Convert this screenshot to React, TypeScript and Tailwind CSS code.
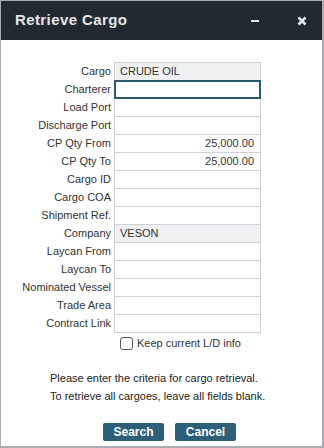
import React from 'react';

type Field = { label: string; value?: string; align?: 'left' | 'right'; readOnly?: boolean; focused?: boolean };

const fields: Field[] = [
  { label: 'Cargo', value: 'CRUDE OIL', readOnly: true },
  { label: 'Charterer', focused: true },
  { label: 'Load Port' },
  { label: 'Discharge Port' },
  { label: 'CP Qty From', value: '25,000.00', align: 'right' },
  { label: 'CP Qty To', value: '25,000.00', align: 'right' },
  { label: 'Cargo ID' },
  { label: 'Cargo COA' },
  { label: 'Shipment Ref.' },
  { label: 'Company', value: 'VESON', readOnly: true },
  { label: 'Laycan From' },
  { label: 'Laycan To' },
  { label: 'Nominated Vessel' },
  { label: 'Trade Area' },
  { label: 'Contract Link' },
];

const FieldRow: React.FC<{ field: Field; first: boolean }> = ({ field, first }) => {
  const box = field.focused
    ? 'border-2 border-[#2b5a6f] relative z-10'
    : 'border border-[#cdd1d6]';
  return (
    <div className={`flex items-stretch h-[19px] ${first ? '' : '-mt-px'}`}>
      <div className="w-[112px] pr-[3px] text-right text-[11px] leading-[19px] text-[#333]">
        {field.label}
      </div>
      <div
        className={`w-[147px] h-[19px] ${box} ${field.readOnly ? 'bg-[#eef0f2]' : 'bg-white'} ${
          field.align === 'right' ? 'text-right pr-[6px]' : 'pl-[5px]'
        } text-[11px] leading-[17px] text-[#333]`}
      >
        {field.value}
      </div>
    </div>
  );
};

const App: React.FC = () => {
  return (
    <div
      className="w-[324px] h-[448px] bg-white border-t border-l border-r-2 border-b-2 border-[#a9adb1] flex flex-col overflow-hidden"
      style={{ fontFamily: '"Liberation Sans", Arial, sans-serif' }}
    >
      {/* Title bar */}
      <div className="h-[39px] bg-[#222a31] flex items-center pl-[14px] pr-[15px]">
        <span className="text-[15px] font-bold tracking-[0.4px] text-[#e4e6e8]">Retrieve Cargo</span>
        <div className="ml-auto flex items-center gap-[38px]">
          <span className="block w-[8px] h-[2px] bg-[#e4e6e8]" />
          <svg width="10" height="10" viewBox="0 0 10 10">
            <path d="M1.5 1.5 L8.5 8.5 M8.5 1.5 L1.5 8.5" stroke="#e4e6e8" strokeWidth="2.6" strokeLinecap="butt" />
          </svg>
        </div>
      </div>

      {/* Form */}
      <div className="pt-[22px] pl-[1px] flex flex-col">
        {fields.map((f, i) => (
          <FieldRow key={f.label} field={f} first={i === 0} />
        ))}
        <label className="flex items-center mt-[3px] ml-[118px] h-[14px]">
          <span className="w-[13px] h-[13px] border border-[#555] rounded-[3px] bg-white" />
          <span className="ml-[4px] text-[11px] text-[#333]">Keep current L/D info</span>
        </label>
      </div>

      <div className="mt-[19px] pl-[49px] text-[11px] leading-[18px] text-[#222]">
        <p>Please enter the criteria for cargo retrieval.</p>
        <p>To retrieve all cargoes, leave all fields blank.</p>
      </div>

      <div className="mt-[18px] flex gap-[11px] pl-[102px]">
        <button className="w-[61px] h-[18px] bg-[#2d5f79] rounded-[2px] text-white text-[12px] font-bold leading-[18px]">
          Search
        </button>
        <button className="w-[61px] h-[18px] bg-[#2d5f79] rounded-[2px] text-white text-[12px] font-bold leading-[18px]">
          Cancel
        </button>
      </div>
    </div>
  );
};

export default App;
